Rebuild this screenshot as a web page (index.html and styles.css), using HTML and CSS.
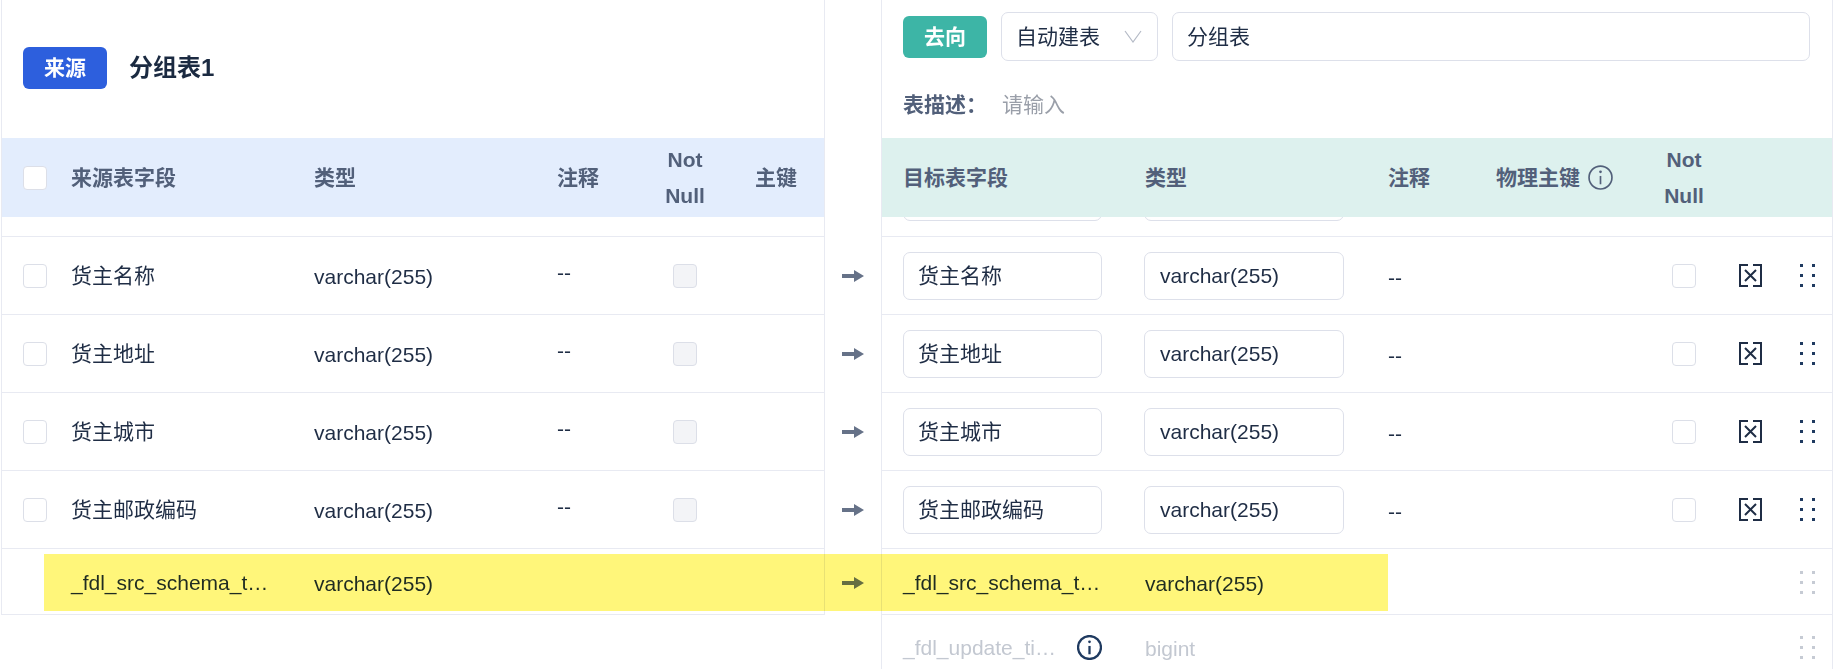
FILE: index.html
```html
<!DOCTYPE html>
<html lang="zh">
<head>
<meta charset="utf-8">
<title>字段映射</title>
<link rel="stylesheet" href="styles.css">
</head>
<body>
<div class="page">
  <section class="panel src">
    <div class="src-head">
      <span class="tag tag-blue">来源</span>
      <span class="title">分组表1</span>
    </div>
    <div class="band band-blue src-grid">
      <span class="check"></span><span>来源表字段</span><span>类型</span><span>注释</span><span class="nn">Not<br>Null</span><span></span><span>主键</span>
    </div>
    <div class="spacer"></div>
    <div class="row src-grid"><span class="check"></span><span>货主名称</span><span class="ty">varchar(255)</span><span class="dash">--</span><span class="check off"></span></div>
    <div class="row src-grid"><span class="check"></span><span>货主地址</span><span class="ty">varchar(255)</span><span class="dash">--</span><span class="check off"></span></div>
    <div class="row src-grid"><span class="check"></span><span>货主城市</span><span class="ty">varchar(255)</span><span class="dash">--</span><span class="check off"></span></div>
    <div class="row src-grid"><span class="check"></span><span>货主邮政编码</span><span class="ty">varchar(255)</span><span class="dash">--</span><span class="check off"></span></div>
    <div class="row short hl src-grid"><span></span><span>_fdl_src_schema_t…</span><span class="ty">varchar(255)</span></div>
  </section>

  <div class="arrows">
    <svg class="arrow" viewBox="0 0 22 12"><path d="M0 4H12V0L22 6L12 12V8H0Z"/></svg>
    <svg class="arrow" viewBox="0 0 22 12"><path d="M0 4H12V0L22 6L12 12V8H0Z"/></svg>
    <svg class="arrow" viewBox="0 0 22 12"><path d="M0 4H12V0L22 6L12 12V8H0Z"/></svg>
    <svg class="arrow" viewBox="0 0 22 12"><path d="M0 4H12V0L22 6L12 12V8H0Z"/></svg>
    <svg class="arrow last" viewBox="0 0 22 12"><path d="M0 4H12V0L22 6L12 12V8H0Z"/></svg>
  </div>

  <section class="panel dst">
    <div class="dst-head">
      <div class="dst-line">
        <span class="tag tag-green">去向</span>
        <span class="box select">自动建表<svg class="chev" viewBox="0 0 18 13"><path d="M1 1L9 12L17 1"/></svg></span>
        <span class="box name">分组表</span>
      </div>
      <div class="desc"><b>表描述：</b><span class="ph">请输入</span></div>
    </div>
    <div class="band band-green dst-grid">
      <span>目标表字段</span><span>类型</span><span>注释</span>
      <span class="pk">物理主键<svg class="info" viewBox="0 0 24 24"><circle cx="12" cy="12" r="11"/><path d="M12 10.500V18.500"/><circle class="dot" cx="12" cy="6.500" r="1.300"/></svg></span>
      <span class="nn">Not<br>Null</span>
    </div>
    <div class="peek dst-grid"><span class="box fld"></span><span class="box fld"></span></div>

    <div class="row dst-grid"><span class="box fld">货主名称</span><span class="box fld">varchar(255)</span><span class="dash2">--</span><span></span><span class="check"></span>
      <svg class="del" viewBox="0 0 23 23"><path d="M9 1H1V22H9M14 1H22V22H14"/><path d="M6 6L17 17M17 6L6 17"/></svg>
      <svg class="grip" viewBox="0 0 15 23"><rect x="0" y="0" width="3" height="3"/><rect x="12" y="0" width="3" height="3"/><rect x="0" y="10" width="3" height="3"/><rect x="12" y="10" width="3" height="3"/><rect x="0" y="20" width="3" height="3"/><rect x="12" y="20" width="3" height="3"/></svg></div>
    <div class="row dst-grid"><span class="box fld">货主地址</span><span class="box fld">varchar(255)</span><span class="dash2">--</span><span></span><span class="check"></span>
      <svg class="del" viewBox="0 0 23 23"><path d="M9 1H1V22H9M14 1H22V22H14"/><path d="M6 6L17 17M17 6L6 17"/></svg>
      <svg class="grip" viewBox="0 0 15 23"><rect x="0" y="0" width="3" height="3"/><rect x="12" y="0" width="3" height="3"/><rect x="0" y="10" width="3" height="3"/><rect x="12" y="10" width="3" height="3"/><rect x="0" y="20" width="3" height="3"/><rect x="12" y="20" width="3" height="3"/></svg></div>
    <div class="row dst-grid"><span class="box fld">货主城市</span><span class="box fld">varchar(255)</span><span class="dash2">--</span><span></span><span class="check"></span>
      <svg class="del" viewBox="0 0 23 23"><path d="M9 1H1V22H9M14 1H22V22H14"/><path d="M6 6L17 17M17 6L6 17"/></svg>
      <svg class="grip" viewBox="0 0 15 23"><rect x="0" y="0" width="3" height="3"/><rect x="12" y="0" width="3" height="3"/><rect x="0" y="10" width="3" height="3"/><rect x="12" y="10" width="3" height="3"/><rect x="0" y="20" width="3" height="3"/><rect x="12" y="20" width="3" height="3"/></svg></div>
    <div class="row dst-grid"><span class="box fld">货主邮政编码</span><span class="box fld">varchar(255)</span><span class="dash2">--</span><span></span><span class="check"></span>
      <svg class="del" viewBox="0 0 23 23"><path d="M9 1H1V22H9M14 1H22V22H14"/><path d="M6 6L17 17M17 6L6 17"/></svg>
      <svg class="grip" viewBox="0 0 15 23"><rect x="0" y="0" width="3" height="3"/><rect x="12" y="0" width="3" height="3"/><rect x="0" y="10" width="3" height="3"/><rect x="12" y="10" width="3" height="3"/><rect x="0" y="20" width="3" height="3"/><rect x="12" y="20" width="3" height="3"/></svg></div>
    <div class="row short hl dst-grid"><span>_fdl_src_schema_t…</span><span class="ty">varchar(255)</span><span></span><span></span><span></span><span></span>
      <svg class="grip faint" viewBox="0 0 15 23"><rect x="0" y="0" width="3" height="3"/><rect x="12" y="0" width="3" height="3"/><rect x="0" y="10" width="3" height="3"/><rect x="12" y="10" width="3" height="3"/><rect x="0" y="20" width="3" height="3"/><rect x="12" y="20" width="3" height="3"/></svg></div>
    <div class="row short dst-grid muted"><span class="fld-info"><span class="clip">_fdl_update_ti…</span><svg class="info strong" viewBox="0 0 24 24"><circle cx="12" cy="12" r="11"/><path d="M12 10.500V18.500"/><circle class="dot" cx="12" cy="6.500" r="1.300"/></svg></span><span class="ty">bigint</span><span></span><span></span><span></span><span></span>
      <svg class="grip faint" viewBox="0 0 15 23"><rect x="0" y="0" width="3" height="3"/><rect x="12" y="0" width="3" height="3"/><rect x="0" y="10" width="3" height="3"/><rect x="12" y="10" width="3" height="3"/><rect x="0" y="20" width="3" height="3"/><rect x="12" y="20" width="3" height="3"/></svg></div>
  </section>

  <div class="highlight"></div>
</div>
</body>
</html>
```
FILE: styles.css
```css
* { box-sizing: border-box; }
html, body { margin: 0; padding: 0; background: #fff; }
body {
  font-family: "Liberation Sans", "Noto Sans CJK SC", sans-serif;
  font-size: 21px;
  line-height: 1.4;
  color: #1f2d45;
}
.page {
  position: relative;
  display: flex;
  align-items: flex-start;
  width: 1835px;
  height: 669px;
  overflow: hidden;
}
.panel { flex: none; }
.src {
  width: 824px;
  height: 615px;
  margin-left: 1px;
  border-left: 1px solid #e8eaf2;
  border-right: 1px solid #e8eaf2;
}
.dst {
  width: 952px;
  height: 669px;
  border-left: 1px solid #e8eaf2;
  border-right: 1px solid #e8eaf2;
}
.src-head {
  height: 138px;
  display: flex;
  align-items: center;
  gap: 22px;
  padding: 0 0 2px 21px;
}
.tag {
  display: flex;
  align-items: center;
  justify-content: center;
  width: 84px;
  height: 42px;
  border-radius: 6px;
  color: #fff;
  font-weight: 700;
  font-size: 21px;
}
.tag-blue { background: #2d5fdd; }
.tag-green { background: #3db5a6; }
.title { font-size: 24px; font-weight: 700; color: #1b2a41; }

.band {
  height: 79px;
  color: #52607a;
  font-weight: 700;
}
.band-blue { background: #e3edfd; }
.band-green { background: #ddf1ee; position: relative; z-index: 1; }
.nn { padding-top: 1px; line-height: 36px; text-align: center; }

.src-grid {
  display: grid;
  grid-template-columns: 48px 243px 243px 103px 50px 45px 1fr;
  align-items: center;
  padding-left: 21px;
}
.dst-grid {
  display: grid;
  grid-template-columns: 242px 243px 108px 164px 48px 85px 1fr;
  align-items: center;
  padding-left: 21px;
}
.spacer { height: 20px; border-bottom: 1px solid #e8eaf2; }
.row { height: 78px; border-bottom: 1px solid #e8eaf2; }
.row.short { height: 66px; }
.row.hl { padding-top: 2px; }
.ty { position: relative; top: 1px; }
.dash { position: relative; top: -3px; }
.dash2 { position: relative; top: 2px; }
.check {
  display: block;
  width: 24px;
  height: 24px;
  background: #fff;
  border: 1px solid #dcdfe8;
  border-radius: 4px;
  justify-self: center;
}
.src-grid > .check:first-child { justify-self: start; }
.check.off { background: #f3f4f7; }
.clip { display: block; width: 174px; white-space: nowrap; }

.arrows {
  flex: none;
  width: 56px;
  padding-top: 270px;
  display: flex;
  flex-direction: column;
  align-items: center;
}
.arrow { width: 22px; height: 12px; margin-bottom: 66px; fill: #667288; flex: none; }
.arrow.last { margin-top: -5px; }

.dst-head { height: 138px; padding: 12px 22px 0 21px; }
.dst-line { display: flex; align-items: center; gap: 14px; height: 49px; }
.box {
  display: flex;
  align-items: center;
  background: #fff;
  border: 1px solid #dde0ea;
  border-radius: 7px;
  padding: 0 14px;
  white-space: nowrap;
}
.select { width: 157px; height: 49px; justify-content: space-between; padding-right: 15px; }
.name { flex: 1; height: 49px; }
.chev { width: 18px; height: 13px; fill: none; stroke: #b4bac6; stroke-width: 1.200; }
.desc { display: flex; gap: 15px; margin-top: 24px; align-items: center; height: 40px; }
.desc b { color: #52607a; font-weight: 700; }
.ph { color: #9a9fa9; }
.pk { display: flex; align-items: center; gap: 8px; }
.info { width: 25px; height: 25px; fill: none; stroke: #52607a; stroke-width: 1.600; flex: none; }
.info .dot { fill: #52607a; stroke: none; }
.info.strong { stroke: #1f3a60; stroke-width: 2.200; }
.info.strong .dot { fill: #1f3a60; }
.fld { width: 199px; height: 48px; }
.fld + .fld { width: 200px; margin-left: -1px; padding-left: 15px; }
.peek {
  height: 20px;
  border-bottom: 1px solid #e8eaf2;
  overflow: hidden;
  align-items: start;
}
.peek .box { margin-top: -44px; }
.del { width: 23px; height: 23px; fill: none; stroke: #1f2d45; stroke-width: 2; justify-self: center; }
.grip { width: 15px; height: 23px; margin-left: 7px; fill: #1f3a60; }
.grip.faint { fill: #c6cbd4; }
.muted { color: #c3c8d1; }
.fld-info { display: flex; align-items: center; }
.highlight {
  position: absolute;
  left: 44px;
  top: 554px;
  width: 1344px;
  height: 57px;
  background: #fff67a;
  mix-blend-mode: multiply;
  pointer-events: none;
}
```
